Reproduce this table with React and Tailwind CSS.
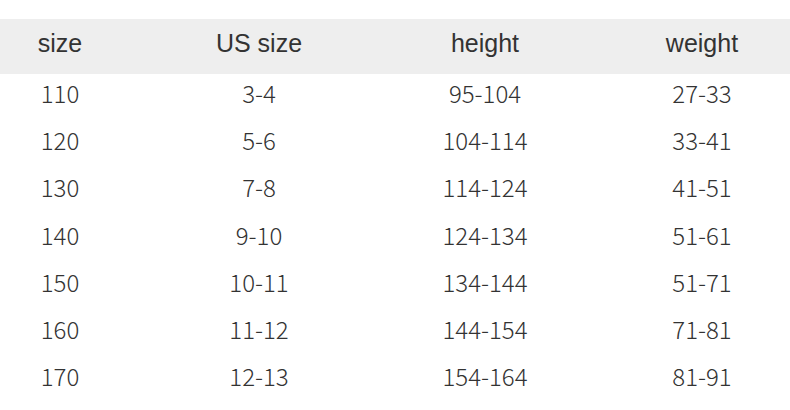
const columns = ['size', 'US size', 'height', 'weight'];

const rows = [
  ['110', '3-4', '95-104', '27-33'],
  ['120', '5-6', '104-114', '33-41'],
  ['130', '7-8', '114-124', '41-51'],
  ['140', '9-10', '124-134', '51-61'],
  ['150', '10-11', '134-144', '51-71'],
  ['160', '11-12', '144-154', '71-81'],
  ['170', '12-13', '154-164', '81-91'],
];

// column boxes chosen so each column's text centres where the reference puts it
const cellClasses = ['w-[120px]', 'w-[278px]', 'w-[216px] pr-[42px]', 'w-[176px]'];

export default function App() {
  return (
    <div className="w-[790px] h-[410px] bg-white pt-[19px] overflow-hidden text-[#333333]">
      <div className="flex h-[55px] bg-[#eeeeee] items-start pt-[10px] font-['Liberation_Sans',Arial,sans-serif] text-[25px] leading-[28px]">
        {columns.map((col, i) => (
          <div key={col} className={`${cellClasses[i]} text-center`}>
            {col}
          </div>
        ))}
      </div>
      <div className="font-['Noto_Sans_CJK_SC','Noto_Sans',sans-serif] font-light text-[24px] leading-none">
        {rows.map((row) => (
          <div key={row[0]} className="flex h-[47.2px] pt-[7px]">
            {row.map((cell, i) => (
              <div key={i} className={`${cellClasses[i]} text-center`}>
                {cell}
              </div>
            ))}
          </div>
        ))}
      </div>
    </div>
  );
}
